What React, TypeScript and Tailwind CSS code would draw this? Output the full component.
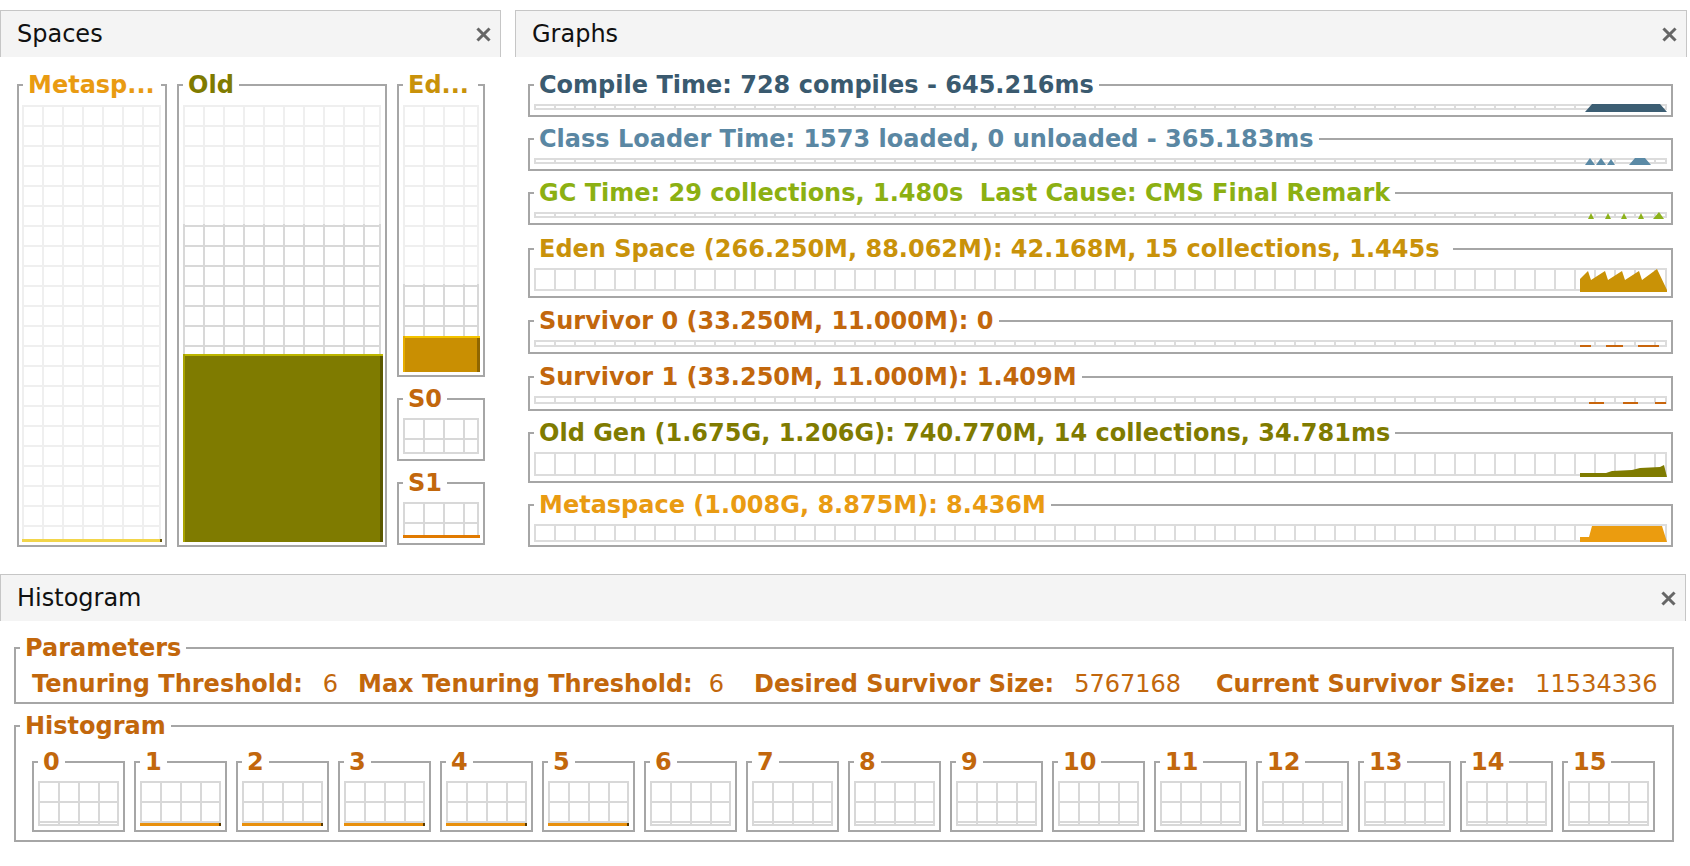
import type { ReactNode } from 'react';

const LIGHT = '#efefef';
const DARK = '#d8d8d8';

function CloseIcon() {
  return (
    <svg width="15" height="15" viewBox="0 0 15 15" className="block">
      <path d="M2.5 2.5 L12.5 12.5 M12.5 2.5 L2.5 12.5" stroke="#666" strokeWidth="3" strokeLinecap="square" />
    </svg>
  );
}

function Tab({ title }: { title: string }) {
  return (
    <div className="flex h-[47px] items-center justify-between border-x border-t border-[#c6c6c6] bg-[#f4f4f4] pl-[16px] pr-[9px]">
      <span className="text-[24px] leading-[24px] text-[#111]">{title}</span>
      <CloseIcon />
    </div>
  );
}

type GridProps = {
  w: number;
  h: number;
  gw?: number;
  split?: number;
  light?: string;
  dark?: string;
  children?: ReactNode;
};

// cells of 20px, light above `split`, darker below
function Grid({ w, h, gw, split = 0, light = LIGHT, dark = DARK, children }: GridProps) {
  const gridW = gw ?? w;
  const xs: number[] = [];
  for (let x = 1; x < gridW - 3; x += 20) xs.push(x);
  xs.push(gridW - 1);
  const ys: number[] = [];
  for (let y = 1; y < h - 3; y += 20) ys.push(y);
  ys.push(h - 1);
  return (
    <svg width={w} height={h} className="block overflow-visible">
      {xs.map((x) => (
        <g key={`v${x}`}>
          {split > 0 && <line x1={x} y1={0} x2={x} y2={Math.min(split, h)} stroke={light} strokeWidth={2} />}
          {split < h && <line x1={x} y1={split} x2={x} y2={h} stroke={dark} strokeWidth={2} />}
        </g>
      ))}
      {ys.map((y) => (
        <line key={`h${y}`} x1={0} y1={y} x2={gridW} y2={y} stroke={y < split ? light : dark} strokeWidth={2} />
      ))}
      {children}
    </svg>
  );
}

function Box({
  title,
  color,
  legendW,
  className,
  children,
}: {
  title: string;
  color: string;
  legendW?: string;
  className?: string;
  children: ReactNode;
}) {
  return (
    <fieldset className={`min-w-0 border-2 border-[#a6a6a6] ${className ?? ''}`}>
      <legend
        className={`ml-[4px] whitespace-pre pl-[5px] pr-[5px] text-[24px] font-bold leading-[24px] ${color} ${legendW ?? ''}`}
      >
        {title}
      </legend>
      {children}
    </fieldset>
  );
}

function Fill({ x, y, w, h, main, top, left, right }: { x: number; y: number; w: number; h: number; main: string; top: string; left: string; right: string }) {
  return (
    <g>
      <rect x={x} y={y} width={w} height={h} fill={main} />
      <rect x={x} y={y} width={w} height={2} fill={top} />
      <rect x={x} y={y} width={2} height={h} fill={left} />
      <rect x={x + w - 3} y={y + 2} width={3} height={h - 2} fill={right} />
    </g>
  );
}

function SpacesPanel() {
  return (
    <div className="flex w-[501px] flex-col">
      <Tab title="Spaces" />
      <div className="flex gap-[10px] pl-[17px] pt-[16px]">
        <Box title="Metasp..." color="text-[#e99b12]" legendW="w-[138px]" className="w-[150px]">
          <div className="pb-[3px] pl-[3px] pt-[8px]">
            <Grid w={141} gw={139} h={437} split={437}>
              <rect x={0} y={434} width={139} height={3} fill="#f2d54a" />
              <rect x={138} y={434} width={2} height={3} fill="#6b5a10" />
            </Grid>
          </div>
        </Box>
        <Box title="Old" color="text-[#7f7b00]" className="w-[210px]">
          <div className="pb-[3px] pl-[4px] pt-[8px]">
            <Grid w={200} gw={198} h={437} split={119}>
              <Fill x={0} y={249} w={200} h={188} main="#7f7b00" top="#bdb600" left="#a9a300" right="#5b5800" />
            </Grid>
          </div>
        </Box>
        <div className="flex w-[88px] flex-col gap-[10px]">
          <Box title="Ed..." color="text-[#c9920a]" legendW="w-[75px]" className="w-[88px]">
            <div className="pb-[3px] pl-[4px] pt-[8px]">
              <Grid w={76} h={267} split={179}>
                <Fill x={0} y={231} w={77} h={36} main="#c98f02" top="#f4c400" left="#e7ad00" right="#8f6600" />
              </Grid>
            </div>
          </Box>
          <Box title="S0" color="text-[#c2670c]" className="w-[88px]">
            <div className="pb-[5px] pl-[4px] pt-[7px]">
              <Grid w={76} h={36} />
            </div>
          </Box>
          <Box title="S1" color="text-[#c2670c]" className="w-[88px]">
            <div className="pb-[5px] pl-[4px] pt-[7px]">
              <Grid w={76} h={36}>
                <rect x={0} y={33} width={77} height={3} fill="#e17a00" />
              </Grid>
            </div>
          </Box>
        </div>
      </div>
    </div>
  );
}

const GRAPHS: { title: string; color: string; h: number; mt: string; pb: string; shape: ReactNode }[] = [
  {
    title: 'Compile Time: 728 compiles - 645.216ms',
    color: 'text-[#3a5a6f]',
    h: 6,
    mt: 'mt-0',
    pb: 'pb-[5px]',
    shape: <polygon points="1051,8 1058,0 1126,0 1133,8" fill="#3c5e73" />,
  },
  {
    title: 'Class Loader Time: 1573 loaded, 0 unloaded - 365.183ms',
    color: 'text-[#5a87a3]',
    h: 6,
    mt: 'mt-[10px]',
    pb: 'pb-[5px]',
    shape: (
      <g fill="#5b8aa6">
        <polygon points="1051,7 1056,0 1061,7" />
        <polygon points="1062,7 1067,0 1072,7" />
        <polygon points="1073,7 1077,1 1081,7" />
        <polygon points="1095,7 1101,0 1111,0 1117,7" />
      </g>
    ),
  },
  {
    title: 'GC Time: 29 collections, 1.480s  Last Cause: CMS Final Remark',
    color: 'text-[#8cb012]',
    h: 6,
    mt: 'mt-[10px]',
    pb: 'pb-[5px]',
    shape: (
      <g fill="#8db21b">
        <polygon points="1054,7 1057,1 1060,7" />
        <polygon points="1071,7 1074,1 1077,7" />
        <polygon points="1087,7 1090,1 1093,7" />
        <polygon points="1104,7 1107,1 1110,7" />
        <polygon points="1119,7 1125,0 1130,7" />
      </g>
    ),
  },
  {
    title: 'Eden Space (266.250M, 88.062M): 42.168M, 15 collections, 1.445s ',
    color: 'text-[#c9920a]',
    h: 23,
    mt: 'mt-[12px]',
    pb: 'pb-[5px]',
    shape: (
      <polygon
        points="1046,24 1046,11 1054,3 1057,12 1071,3 1074,12 1088,3 1091,12 1105,3 1108,12 1123,1 1133,22 1133,24"
        fill="#c99206"
      />
    ),
  },
  {
    title: 'Survivor 0 (33.250M, 11.000M): 0',
    color: 'text-[#c2670c]',
    h: 7,
    mt: 'mt-[11px]',
    pb: 'pb-[5px]',
    shape: (
      <g fill="#c8650c">
        <rect x={1046} y={5} width={11} height={2} />
        <rect x={1072} y={5} width={17} height={2} />
        <rect x={1104} y={5} width={21} height={2} />
      </g>
    ),
  },
  {
    title: 'Survivor 1 (33.250M, 11.000M): 1.409M',
    color: 'text-[#c2670c]',
    h: 8,
    mt: 'mt-[11px]',
    pb: 'pb-[5px]',
    shape: (
      <g fill="#c8650c">
        <rect x={1055} y={6} width={15} height={2} />
        <rect x={1089} y={6} width={15} height={2} />
        <rect x={1121} y={6} width={11} height={2} />
      </g>
    ),
  },
  {
    title: 'Old Gen (1.675G, 1.206G): 740.770M, 14 collections, 34.781ms',
    color: 'text-[#7f7b00]',
    h: 24,
    mt: 'mt-[10px]',
    pb: 'pb-[5px]',
    shape: (
      <polygon
        points="1046,25 1046,21 1072,21 1078,19 1098,18 1106,16 1126,15 1130,13 1133,25"
        fill="#7f7b00"
      />
    ),
  },
  {
    title: 'Metaspace (1.008G, 8.875M): 8.436M',
    color: 'text-[#e99b12]',
    h: 18,
    mt: 'mt-[10px]',
    pb: 'pb-[3px]',
    shape: <polygon points="1046,18 1046,13 1055,13 1058,2 1128,2 1133,18" fill="#eb9c0f" />,
  },
];

function GraphsPanel() {
  return (
    <div className="flex w-[1172px] flex-col">
      <Tab title="Graphs" />
      <div className="flex flex-col pl-[13px] pt-[16px]">
        {GRAPHS.map((g) => (
          <Box key={g.title} title={g.title} color={g.color} className={`w-[1145px] ${g.mt}`}>
            <div className={`pl-[4px] pt-[7px] ${g.pb}`}>
              <Grid w={1133} h={g.h} light="#dcdcdc" dark="#dcdcdc">
                {g.shape}
              </Grid>
            </div>
          </Box>
        ))}
      </div>
    </div>
  );
}

function Param({ label, value, w, gap }: { label: string; value: string; w?: string; gap: string }) {
  return (
    <div className={`flex ${w ?? ''}`}>
      <span className="font-bold">{label}</span>
      <span className={gap}>{value}</span>
    </div>
  );
}

function HistogramPanel() {
  const bins = Array.from({ length: 16 }, (_, i) => i);
  return (
    <div className="mt-[27px] flex w-[1686px] flex-col">
      <Tab title="Histogram" />
      <div className="flex flex-col pl-[14px] pt-[15px]">
        <Box title="Parameters" color="text-[#c2670c]" className="w-[1660px]">
          <div className="flex h-[42px] items-start whitespace-pre pl-[16px] pt-[12px] text-[24px] leading-[24px] text-[#c2670c]">
            <Param label="Tenuring Threshold:" value="6" w="w-[326px]" gap="ml-[20px]" />
            <Param label="Max Tenuring Threshold:" value="6" w="w-[396px]" gap="ml-[16px]" />
            <Param label="Desired Survivor Size:" value="5767168" w="w-[462px]" gap="ml-[20px]" />
            <Param label="Current Survivor Size:" value="11534336" gap="ml-[20px]" />
          </div>
        </Box>
        <Box title="Histogram" color="text-[#c2670c]" className="mt-[10px] w-[1660px]">
          <div className="flex gap-[9px] pb-[8px] pl-[16px] pt-[12px]">
            {bins.map((i) => (
              <Box key={i} title={String(i)} color="text-[#c2670c]" className="w-[93px]">
                <div className="pb-[4px] pl-[4px] pt-[7px]">
                  <Grid w={81} h={45} light={DARK} dark={DARK}>
                    {i >= 1 && i <= 5 && (
                      <g>
                        <rect x={0} y={42} width={81} height={3} fill="#e8900d" />
                        <rect x={79} y={42} width={2} height={3} fill="#5a3a00" />
                      </g>
                    )}
                  </Grid>
                </div>
              </Box>
            ))}
          </div>
        </Box>
      </div>
    </div>
  );
}

export default function App() {
  return (
    <div className="flex h-[866px] w-[1690px] flex-col overflow-hidden bg-white pt-[10px] font-['DejaVu_Sans',sans-serif]">
      <div className="flex h-[537px] gap-[14px]">
        <SpacesPanel />
        <GraphsPanel />
      </div>
      <HistogramPanel />
    </div>
  );
}
